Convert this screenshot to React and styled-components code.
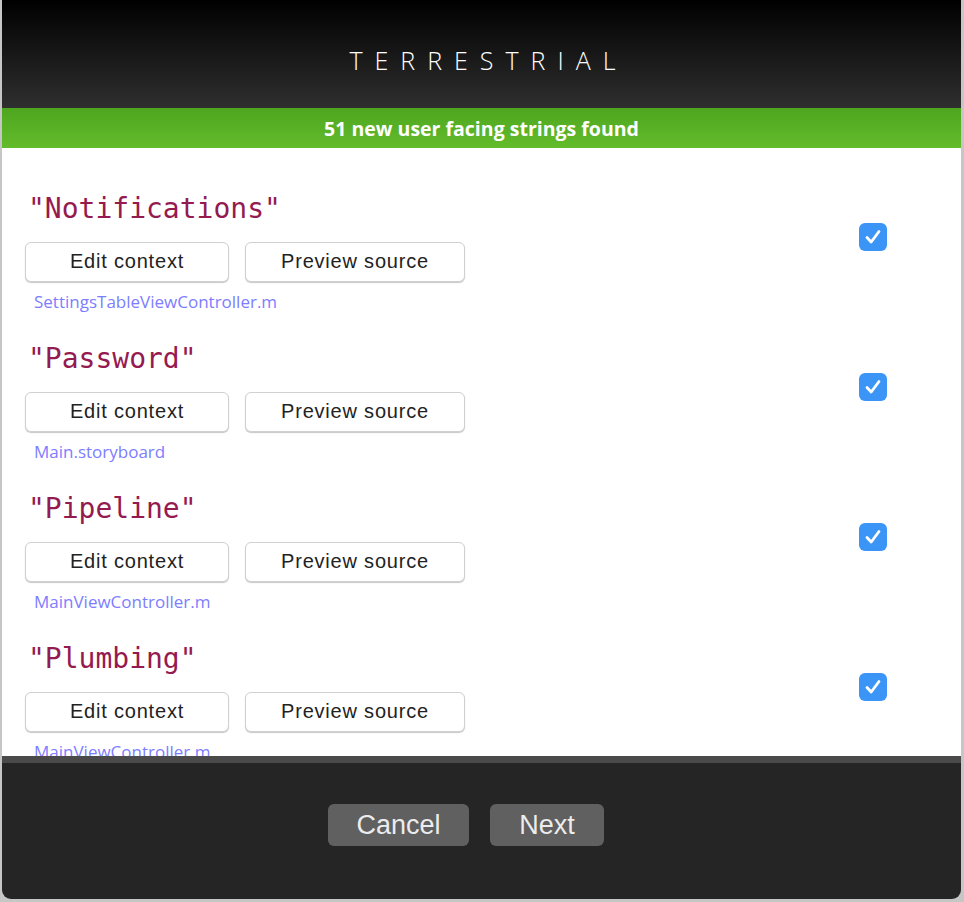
import React from 'react';
import styled, { createGlobalStyle } from 'styled-components';

const GlobalStyle = createGlobalStyle`
  html, body {
    margin: 0;
    padding: 0;
    background: #c6c6c6;
  }
  body {
    font-family: "Liberation Sans", Arial, sans-serif;
  }
`;

const Window = styled.div`
  margin-left: 2px;
  width: 959px;
  height: 899px;
  display: flex;
  flex-direction: column;
  border-radius: 0 0 9px 9px;
  overflow: hidden;
  background: #252525;
`;

const Header = styled.header`
  height: 108px;
  flex-shrink: 0;
  box-sizing: border-box;
  padding-top: 12px;
  display: flex;
  align-items: center;
  justify-content: center;
  background: linear-gradient(to bottom, #000000 0%, #151515 45%, #2f2f2f 100%);
`;

const Brand = styled.h1`
  margin: 0 0 0 14px;
  font-family: "Open Sans", "Liberation Sans", sans-serif;
  font-weight: 300;
  font-size: 25px;
  letter-spacing: 12px;
  color: #ffffff;
`;

const Banner = styled.div`
  height: 40px;
  flex-shrink: 0;
  display: flex;
  align-items: center;
  justify-content: center;
  background: linear-gradient(to bottom, #4ea61f, #63bc2b);
  font-family: "Open Sans", "Liberation Sans", sans-serif;
  font-weight: 700;
  font-size: 19.5px;
  color: #ffffff;
`;

const List = styled.div`
  height: 608px;
  flex-shrink: 0;
  overflow: hidden;
  background: #ffffff;
  padding: 38px 74px 0 23px;
  box-sizing: border-box;
`;

const Item = styled.div`
  height: 150px;
  display: flex;
  justify-content: space-between;
  align-items: flex-start;
`;

const Main = styled.div`
  display: flex;
  flex-direction: column;
`;

const Term = styled.div`
  height: 46px;
  line-height: 46px;
  padding-left: 3px;
  font-family: "DejaVu Sans Mono", "Liberation Mono", monospace;
  font-size: 28px;
  color: #951a4f;
`;

const Actions = styled.div`
  display: flex;
  gap: 16px;
  margin-top: 10px;
`;

const ActionButton = styled.button`
  width: ${p => p.$w}px;
  height: 40px;
  box-sizing: border-box;
  background: #ffffff;
  border: 1px solid #d0d0d0;
  border-radius: 6px;
  box-shadow: 0 1px 1px rgba(0, 0, 0, 0.22);
  font-family: "Liberation Sans", Arial, sans-serif;
  font-size: 20px;
  letter-spacing: 0.8px;
  color: #222222;
  padding: 0 0 2px;
`;

const FileName = styled.div`
  margin-top: 10px;
  height: 20px;
  line-height: 20px;
  padding-left: 9px;
  font-family: "Open Sans", "Lato", sans-serif;
  font-size: 17px;
  color: #7d7dff;
  white-space: nowrap;
`;

const Check = styled.div`
  margin-top: 37px;
  width: 28px;
  height: 28px;
  border-radius: 6px;
  background: #3b95f6;
  display: flex;
  align-items: center;
  justify-content: center;
`;

const Divider = styled.div`
  height: 7px;
  flex-shrink: 0;
  background: #4a4a4a;
`;

const Footer = styled.footer`
  flex: 1;
  display: flex;
  justify-content: center;
  align-items: flex-start;
  gap: 21px;
  padding: 41px 31px 0 0;
`;

const FooterButton = styled.button`
  width: ${p => p.$w}px;
  height: 42px;
  border: none;
  border-radius: 6px;
  background: #606060;
  color: #ececec;
  font-family: "Liberation Sans", Arial, sans-serif;
  font-size: 27px;
  padding: 0;
`;

const strings = [
  { term: 'Notifications', file: 'SettingsTableViewController.m' },
  { term: 'Password', file: 'Main.storyboard' },
  { term: 'Pipeline', file: 'MainViewController.m' },
  { term: 'Plumbing', file: 'MainViewController.m' },
];

function CheckMark() {
  return (
    <svg width="18" height="16" viewBox="0 0 18 16">
      <path d="M3 8.5 L7.2 13 L15 2.5" fill="none" stroke="#fff" strokeWidth="2.8" strokeLinecap="round" strokeLinejoin="round" />
    </svg>
  );
}

export default function App() {
  return (
    <>
      <GlobalStyle />
      <Window>
        <Header>
          <Brand>TERRESTRIAL</Brand>
        </Header>
        <Banner>51 new user facing strings found</Banner>
        <List>
          {strings.map(s => (
            <Item key={s.term}>
              <Main>
                <Term>"{s.term}"</Term>
                <Actions>
                  <ActionButton $w={204}>Edit context</ActionButton>
                  <ActionButton $w={220}>Preview source</ActionButton>
                </Actions>
                <FileName>{s.file}</FileName>
              </Main>
              <Check>
                <CheckMark />
              </Check>
            </Item>
          ))}
        </List>
        <Divider />
        <Footer>
          <FooterButton $w={141}>Cancel</FooterButton>
          <FooterButton $w={114}>Next</FooterButton>
        </Footer>
      </Window>
    </>
  );
}
